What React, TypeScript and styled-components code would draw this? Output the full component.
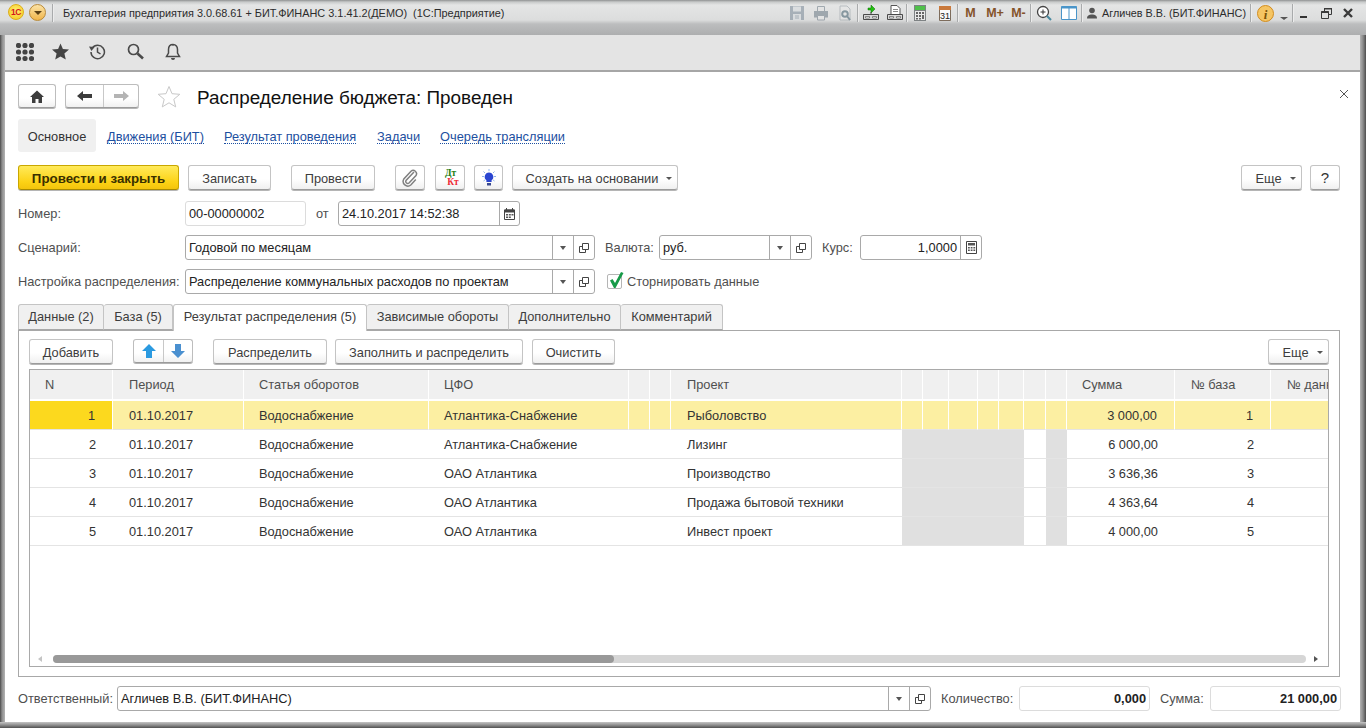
import React from "react";
import styled, { createGlobalStyle } from "styled-components";

const Global = createGlobalStyle`
  html, body { margin: 0; padding: 0; overflow: hidden; background: #6a6a6a; }
  * { box-sizing: border-box; }
  body { font-family: "Liberation Sans", Arial, sans-serif; font-size: 12.8px; color: #333; }
`;

const Frame = styled.div`
  width: 1366px; height: 728px; display: flex; flex-direction: column; overflow: hidden;
  background: linear-gradient(90deg, #4a4a4a 0, #8c8c8c 2px, #b4b4b4 5px, #b4b4b4 1360px, #8a8a8a 1363px, #4e4e4e 1366px);
`;
const TitleBar = styled.div`
  height: 35px; flex: none; display: flex; align-items: flex-start; padding: 4px 0 0 8px; position: relative;
  background: linear-gradient(180deg, #8f9192 0, #c8caca 2px, #e4e5e5 5px, #dcdddd 20px, #bcbdbe 24px, #adaeaf 35px);
`;
const Logo = styled.span`
  width: 16px; height: 16px; border-radius: 50%; flex: none; display: flex; align-items: center; justify-content: center;
  background: radial-gradient(circle at 50% 40%, #ffee70, #f5c71e); border: 1px solid #dcae18;
  color: #d3161b; font: bold 8.5px "Liberation Sans", sans-serif; letter-spacing: -0.5px;
`;
const MenuRound = styled.span`
  width: 17px; height: 17px; margin-left: 5px; border-radius: 50%; flex: none; display: flex; align-items: center; justify-content: center;
  background: linear-gradient(180deg, #fbe3a6, #f0b54a); border: 1px solid #b98a38;
  &::after { content: ""; border-left: 4px solid transparent; border-right: 4px solid transparent; border-top: 4px solid #5a4015; }
`;
const TitleSep = styled.i<{ $ml?: number }>`
  width: 1px; height: 18px; flex: none; background: #a9abac; box-shadow: 1px 0 #ececec; margin-left: ${p => p.$ml ?? 0}px;
`;
const AppName = styled.span`
  margin-left: 10px; font-size: 10.9px; line-height: 18px; color: #2c2c2c; white-space: pre;
`;
const TitleTools = styled.div`
  margin-left: auto; display: flex; align-items: center; height: 18px; padding-right: 7px;
`;
const ToolCell = styled.span<{ $w: number; $dim?: boolean }>`
  width: ${p => p.$w}px; height: 18px; flex: none; display: flex; align-items: center; justify-content: center;
  opacity: ${p => (p.$dim ? 0.5 : 1)};
`;
const MemText = styled.span`
  font: bold 12.5px "Liberation Sans", sans-serif; color: #84532a; white-space: nowrap;
`;
const UserName = styled.span`
  font-size: 10.8px; color: #2c2c2c; white-space: nowrap; width: 148px; margin-left: 1px;
`;

const TopBar = styled.div`
  height: 37px; flex: none; margin: 0 6px 0 5px; background: #e4e4e4; border-bottom: 2px solid #a6a6a6;
  display: flex; align-items: center; padding: 0 0 2px 11px;
`;
const TopIcon = styled.span<{ $w: number }>`
  width: ${p => p.$w}px; flex: none; display: flex; justify-content: flex-start; align-items: center;
`;

const Content = styled.div`
  flex: none; height: 650px; margin: 0 6px 0 5px; background: #fff; padding: 12px 20px 0 13px;
  display: flex; flex-direction: column;
`;
const BottomEdge = styled.div`
  height: 6px; flex: none; background: linear-gradient(180deg, #c4c4c4 0, #909090 3px, #505050 6px);
`;
const HeaderRow = styled.div`
  height: 24px; flex: none; display: flex; align-items: center;
`;
const NavGroup = styled.div<{ $ml?: number }>`
  display: flex; height: 24px; flex: none; margin-left: ${p => p.$ml ?? 0}px; border: 1px solid #bdbdbd; border-bottom-color: #9b9b9b; border-radius: 3px;
  background: linear-gradient(180deg, #fff 60%, #f1f1f1); box-shadow: 0 1px 0 #b5b5b5;
`;
const NavBtn = styled.span<{ $w: number; $sep?: boolean }>`
  width: ${p => p.$w}px; display: flex; align-items: center; justify-content: center; border-left: ${p => (p.$sep ? "1px solid #c8c8c8" : "none")};
`;
const StarWrap = styled.span`
  margin-left: 17px; width: 25px; height: 24px; flex: none; display: flex; align-items: center; justify-content: center;
`;
const Title = styled.h1`
  margin: 3px 0 0 16px; font-size: 18.9px; font-weight: 400; color: #111; white-space: nowrap; line-height: 24px;
`;
const CloseX = styled.span`
  margin-left: auto; margin-right: -10px; width: 12px; height: 12px; display: flex; margin-top: -4px;
`;
const LinksRow = styled.nav`
  height: 33px; flex: none; margin-top: 11px; display: flex; align-items: stretch;
`;
const CurrentLink = styled.span`
  width: 78px; background: #f0f0f0; border-radius: 3px; display: flex; align-items: center; justify-content: center; color: #333; padding-top: 1px;
`;
const Link = styled.a<{ $left: number }>`
  margin: 2px 0 0 ${p => p.$left}px; align-self: center; color: #1c4fa0; text-decoration: none; border-bottom: 1px dotted #1c4fa0; line-height: 13px; white-space: nowrap;
`;

const Bar = styled.div<{ $mt?: number }>`
  height: 26px; flex: none; display: flex; align-items: stretch; margin-top: ${p => p.$mt ?? 13}px;
`;
const Btn = styled.button<{ $w: number; $ml?: number; $push?: boolean }>`
  width: ${p => p.$w}px; margin-left: ${p => (p.$push ? "auto" : `${p.$ml ?? 0}px`)}; height: 25px; flex: none; padding: 1px 0 0;
  display: flex; align-items: center; justify-content: center; gap: 6px; font: 12.8px "Liberation Sans", sans-serif; color: #3d3d3d;
  border: 1px solid #c4c4c4; border-bottom-color: #9b9b9b; border-radius: 3px; background: linear-gradient(180deg, #fff 55%, #f0f0f0);
  box-shadow: 0 1px 0 #b5b5b5;
`;
const PrimaryBtn = styled(Btn)`
  font-size: 13.3px; font-weight: 700; color: #3a3000; border-color: #c9a700; border-bottom-color: #a88a00;
  background: linear-gradient(180deg, #ffea5a, #fcd215 70%, #f3c40c);
`;
const HelpBtn = styled(Btn)`
  font-size: 15px; color: #333; padding: 0;
`;
const DropBtn = styled(Btn)`
  gap: 8px; padding-left: 8px;
`;
const Caret = styled.i`
  width: 0; height: 0; border-left: 3px solid transparent; border-right: 3px solid transparent; border-top: 3px solid #555; margin-top: 1px;
`;
const DtKt = styled.span`
  display: flex; flex-direction: column; font: bold 9.5px/9px "Liberation Serif", serif; margin-left: 1px;
`;
const Dt = styled.b`color: #1e7d12;`;
const Kt = styled.b`color: #ee2a35; margin-left: 5px;`;

const FieldRow = styled.div<{ $mt?: number }>`
  height: 25px; flex: none; margin-top: ${p => p.$mt ?? 9}px; display: flex; align-items: center;
`;
const Label = styled.label<{ $w?: number; $ml?: number }>`
  color: #4f4f4f; white-space: nowrap; flex: none; ${p => (p.$w ? `width: ${p.$w}px;` : "")} margin-left: ${p => p.$ml ?? 0}px;
`;
const Field = styled.div<{ $w: number; $soft?: boolean; $ml?: number }>`
  width: ${p => p.$w}px; height: 25px; flex: none; display: flex; align-items: stretch; margin-left: ${p => p.$ml ?? 0}px;
  border: 1px solid ${p => (p.$soft ? "#dcdcdc" : "#a9a9a9")}; border-radius: 3px; background: #fff;
`;
const FieldText = styled.span<{ $right?: boolean; $bold?: boolean }>`
  flex: 1; min-width: 0; display: flex; align-items: center; padding: 0 3px; color: #222; white-space: nowrap;
  justify-content: ${p => (p.$right ? "flex-end" : "flex-start")}; font-weight: ${p => (p.$bold ? 700 : 400)};
`;
const FieldBtn = styled.span<{ $w?: number }>`
  width: ${p => p.$w ?? 21}px; flex: none; border-left: 1px solid #a9a9a9; display: flex; align-items: center; justify-content: center;
`;
const CheckBox = styled.span`
  width: 15px; height: 15px; margin-left: 12px; flex: none; border: 1px solid #b5b5b5; border-radius: 2px; position: relative;
`;
const CheckMark = styled.svg`
  position: absolute; left: 1px; top: -4px;
`;
const CheckLabel = styled.span`
  margin-left: 5px; color: #4f4f4f; white-space: nowrap;
`;

const Tabs = styled.div`
  height: 26px; flex: none; margin-top: 10px; display: flex; position: relative; z-index: 1;
`;
const Tab = styled.span<{ $w: number; $active?: boolean }>`
  width: ${p => p.$w}px; height: ${p => (p.$active ? 27 : 26)}px; flex: none; display: flex; align-items: center; justify-content: center; white-space: nowrap;
  padding-bottom: ${p => (p.$active ? 3 : 2)}px;
  color: #3d3d3d; background: ${p => (p.$active ? "#fff" : "#f0f0f0")}; border: 1px solid #c4c4c4; border-left-width: ${p => (p.$active ? 1 : 0)}px;
  border-bottom: ${p => (p.$active ? "none" : "1px solid #a8a8a8")}; border-radius: 3px 3px 0 0;
  &:first-child { border-left-width: 1px; }
`;
const Panel = styled.section`
  height: 347px; flex: none; border: 1px solid #a8a8a8; padding: 8px 10px 9px; display: flex; flex-direction: column;
`;
const Grid = styled.div`
  margin-top: 4px; flex: 1; min-height: 0; border: 1px solid #a9a9a9; display: flex; flex-direction: column; overflow: hidden;
`;
const Table = styled.div<{ $cols: string }>`
  flex: 1; display: grid; grid-template-columns: ${p => p.$cols}; grid-auto-rows: 29px; align-content: start; width: max-content;
  grid-template-rows: 31px;
`;
const Head = styled.div<{ $pad: number }>`
  background: #f0f0f0; border-right: 1px solid #fff; border-bottom: 2px solid #fff; color: #4f4f4f; display: flex; align-items: center; padding-left: ${p => p.$pad}px; white-space: nowrap;
`;
const Cell = styled.div<{ $right?: boolean; $sel?: boolean; $cur?: boolean; $grey?: boolean; $pad?: number }>`
  display: flex; align-items: center; white-space: nowrap; color: #333;
  padding: 0 ${p => (p.$right ? 17 : 0)}px 0 ${p => (p.$right ? 0 : p.$pad ?? 15)}px;
  justify-content: ${p => (p.$right ? "flex-end" : "flex-start")};
  background: ${p => (p.$cur ? "#fcd91e" : p.$sel ? "#fcefa2" : p.$grey ? "#e0e0e0" : "#fff")};
  border-right: ${p => (p.$sel || p.$cur ? "1px solid #fff" : "0")};
  border-bottom: 1px solid #e4e4e4;
`;
const ScrollRow = styled.div`
  height: 15px; flex: none; display: flex; align-items: center; padding: 0 10px 0 8px;
`;
const ArrowL = styled.i`
  width: 0; height: 0; border-top: 3px solid transparent; border-bottom: 3px solid transparent; border-right: 4px solid #c4c4c4;
`;
const ArrowR = styled.i`
  width: 0; height: 0; border-top: 3px solid transparent; border-bottom: 3px solid transparent; border-left: 4px solid #555; margin-left: 8px;
`;
const Track = styled.div`
  flex: 1; height: 8px; margin-left: 11px; border-radius: 4px; background: #d6d6d6; display: flex;
`;
const Thumb = styled.div`
  width: 561px; border-radius: 4px; background: #999;
`;
const Footer = styled.div`
  height: 25px; flex: none; margin-top: 9px; display: flex; align-items: center;
`;

const Tool = ({ children, w = 16, h = 16 }: { children: React.ReactNode; w?: number; h?: number }) => (
  <svg width={w} height={h} viewBox={`0 0 ${w} ${h}`}>{children}</svg>
);

const SaveIcon = () => <Tool><path d="M1 1h14v14H1z" fill="#6f8090" /><path d="M4 1.500h8v5H4z" fill="#d5dade" /><path d="M4 9h8v6H4z" fill="#d5dade" /><path d="M6 11h4M6 13h4" stroke="#6f8090" /></Tool>;
const PrintIcon = () => <Tool><path d="M4.500 1.500h7v5h-7z" fill="#e4e4e4" stroke="#5f6f7c" /><path d="M1 6h14v6.500H1z" fill="#5f6f7c" /><path d="M4.500 10.500h7v4.500h-7z" fill="#e8e8e8" stroke="#5f6f7c" /></Tool>;
const PreviewIcon = () => <Tool><path d="M3 1h7l3 3v11H3z" fill="#e8e8e8" stroke="#8e979e" /><circle cx="8" cy="9" r="2.800" fill="none" stroke="#2f5060" strokeWidth="2" /><path d="M10 11l3 4" stroke="#2f5060" strokeWidth="2" /></Tool>;
const LoadIcon = () => <Tool><path d="M5 3h3V0l4 4-4 4V5H5z" fill="#22c010" stroke="#0b6d02" strokeWidth=".5" /><path d="M.5 9.500h15v5H.5z" fill="#d8d8d8" stroke="#4a4a4a" /><path d="M2.500 11.500h4v1.500h-4zM9.500 11.500h4v1.500h-4z" fill="#fff" stroke="#4a4a4a" strokeWidth=".6" /><path d="M8 7v2.500" stroke="#4a4a4a" /></Tool>;
const FileIcon = () => <Tool><path d="M4 .5h6l3 3v6H4z" fill="#fff" stroke="#555" /><path d="M6 4.500h5M6 6.500h5" stroke="#888" /><path d="M.5 9.500h15v5H.5z" fill="#d8d8d8" stroke="#4a4a4a" /><path d="M2.500 11.500h4v1.500h-4zM9.500 11.500h4v1.500h-4z" fill="#fff" stroke="#4a4a4a" strokeWidth=".6" /></Tool>;
const CalcIcon = () => <Tool><path d="M2 0h12v16H2z" fill="#7e8284" /><path d="M3 1h10v4H3z" fill="#4fc04a" /><path d="M3 6h10v9H3z" fill="#e9e9e9" /><path d="M4 7h2v2H4zM7 7h2v2H7zM10 7h2v2h-2zM4 10h2v2H4zM7 10h2v2H7zM10 10h2v4h-2zM4 13h2v1.500H4zM7 13h2v1.500H7z" fill="#666" /></Tool>;
const CalendarIcon = () => <Tool><path d="M2.500 1.500h11v14h-11z" fill="#fafafa" stroke="#7d6c5c" /><path d="M2 1h12v4H2z" fill="#c9793c" /><text x="8" y="14" textAnchor="middle" fontSize="9" fontFamily="Liberation Sans" fill="#222">31</text></Tool>;
const ZoomIcon = () => <Tool><circle cx="7" cy="7" r="5.500" fill="#fff" stroke="#444" strokeWidth="1.300" /><path d="M7 4.500v5M4.500 7h5" stroke="#333" /><path d="M11 11l4 4" stroke="#4a8aa0" strokeWidth="2.200" /></Tool>;
const PanelsIcon = () => <Tool><path d="M.5 1.500h15v13H.5z" fill="#fff" stroke="#4a95c9" /><path d="M.5 1.500h15v2H.5z" fill="#4a95c9" /><path d="M8 2v12" stroke="#4a95c9" /></Tool>;
const PersonIcon = () => <Tool w={10} h={12}><circle cx="5" cy="3.500" r="2.800" fill="#555" /><path d="M0 11.500c0-3 2-4 5-4s5 1 5 4z" fill="#555" /></Tool>;
const InfoIcon = () => <Tool w={17} h={17}><circle cx="8.500" cy="8.500" r="8" fill="#f5c563" stroke="#d18c1f" /><text x="8.500" y="13.500" textAnchor="middle" fontSize="13" fontWeight="bold" fontStyle="italic" fontFamily="Liberation Serif" fill="#7a5205">i</text></Tool>;
const CaretDown = () => <Tool w={8} h={16}><path d="M0 12h8L4 15z" fill="#555" /></Tool>;
const MinIcon = () => <Tool w={10} h={16}><path d="M1 11h7v2H1z" fill="#333" /></Tool>;
const RestoreIcon = () => <Tool w={13} h={13}><path d="M4.500 1.500h7v6H9M4.500 1.500V4" fill="none" stroke="#3a3a3a" /><path d="M1.500 4.500h7v7h-7z" fill="none" stroke="#3a3a3a" /><path d="M4 1h8v1.500H4zM1 4.500h8V6H1z" fill="#3a3a3a" /></Tool>;
const XIcon = () => <Tool w={12} h={12}><path d="M2 2l8 8M10 2l-8 8" stroke="#3a3a3a" strokeWidth="2.400" /></Tool>;

const GridDots = () => (
  <Tool w={18} h={18}>
    {[2.5, 9, 15.5].flatMap(y => [2.5, 9, 15.5].map(x => <circle key={`${x}${y}`} cx={x} cy={y} r="2.600" fill="#444" />))}
  </Tool>
);
const StarFill = () => <Tool w={17} h={17}><path d="M8.500 .5l2.400 5.600 6.100.5-4.600 4 1.400 6-5.300-3.200L3.200 16.600l1.400-6L0 6.600l6.100-.5z" fill="#444" /></Tool>;
const HistoryIcon = () => <Tool w={17} h={17}><path d="M3.200 5.200A6.700 6.700 0 1 1 2 9" fill="none" stroke="#4a4a4a" strokeWidth="1.500" /><path d="M0 3.500l5.500.5-3 4z" fill="#4a4a4a" /><path d="M8.500 4.500V9l3 2" fill="none" stroke="#4a4a4a" strokeWidth="1.500" /></Tool>;
const SearchIcon = () => <Tool w={17} h={17}><circle cx="6.500" cy="6.500" r="5" fill="none" stroke="#4a4a4a" strokeWidth="1.700" /><path d="M10.500 10.500L16 15.500" stroke="#4a4a4a" strokeWidth="2.600" /></Tool>;
const BellIcon = () => <Tool w={16} h={18}><path d="M8 1.500c-3 0-4.500 2.400-4.500 5v3.500L1.500 13.500h13L12.500 10V6.500c0-2.600-1.500-5-4.500-5z" fill="none" stroke="#4a4a4a" strokeWidth="1.500" /><path d="M6 15a2 2 0 0 0 4 0z" fill="#4a4a4a" /><path d="M7 1h2v1.500H7z" fill="#4a4a4a" /></Tool>;

const HomeIcon = () => <Tool w={14} h={13}><path d="M7 .5L14 7h-2v6H8.500V9h-3v4H2V7H0z" fill="#3c3c3c" /></Tool>;
const ArrowLeft = ({ c }: { c: string }) => <Tool w={15} h={12}><path d="M0 6l6-5v3h9v4H6v3z" fill={c} /></Tool>;
const ArrowRight = ({ c }: { c: string }) => <Tool w={15} h={12}><path d="M15 6L9 1v3H0v4h9v3z" fill={c} /></Tool>;
const StarOutline = () => <Tool w={24} h={23}><path d="M12 1.500l3 7.200 7.800.6-6 5 1.900 7.600L12 17.800l-6.700 4.100 1.900-7.600-6-5L9 8.700z" fill="#fff" stroke="#c8c8c8" /></Tool>;
const CloseThin = () => <Tool w={12} h={12}><path d="M2 2l8 8M10 2l-8 8" stroke="#555" strokeWidth="1" /></Tool>;

const ClipIcon = () => <Tool w={18} h={18}><path d="M13 3L5 11.500a2 2 0 0 0 3 2.500l7-7.500a3.300 3.300 0 0 0-5-4.200L2.800 10a4.700 4.700 0 0 0 7 6l5-5.500" fill="none" stroke="#808080" strokeWidth="1.500" /></Tool>;
const BulbIcon = () => (
  <Tool w={18} h={18}>
    <path d="M9 3.500a4.300 4.300 0 0 0-2.600 7.700V13h5.200v-1.800A4.300 4.300 0 0 0 9 3.500z" fill="#2a45d0" />
    <path d="M7 14h4v2.500H7z" fill="#3a4a90" />
    <path d="M9 0v2.200M2 7.500h2.200M13.800 7.500H16M3.500 2.500L5 4M14.500 2.500L13 4M3.500 12l1.400-1M14.500 12l-1.400-1" stroke="#8fb4ea" />
  </Tool>
);
const DropTri = () => <Tool w={6} h={4}><path d="M0 0h6L3 4z" fill="#555" /></Tool>;
const OpenIcon = () => <Tool w={12} h={12}><path d="M4.500 1.500h6v6h-6z" fill="none" stroke="#444" /><path d="M4.500 4.500h-3v6h6v-3" fill="none" stroke="#444" /></Tool>;
const DateIcon = () => <Tool w={11} h={12}><path d="M.5 2h10v9.500H.5z" fill="#fff" stroke="#444" /><path d="M.5 1.500h10v3H.5z" fill="#444" /><path d="M2.500 0v2M8.500 0v2" stroke="#444" /><path d="M2 6h2v1.500H2zM4.800 6h2v1.500h-2zM7.500 6h2v1.500h-2zM2 8.500h2V10H2zM4.800 8.500h2V10h-2z" fill="#555" /></Tool>;
const CalcSmall = () => <Tool w={11} h={13}><path d="M.5.500h10v12H.5z" fill="#fff" stroke="#444" /><path d="M2 2h7v2.500H2z" fill="#555" /><path d="M2 6h1.800v1.500H2zM4.700 6h1.800v1.500H4.700zM7.400 6h1.800v1.500H7.400zM2 8.500h1.800V10H2zM4.700 8.500h1.800V10H4.700zM7.400 8.500h1.800V10H7.400z" fill="#555" /></Tool>;
const ArrowUp = () => <Tool w={14} h={14}><path d="M7 0l7 7H10v7H4V7H0z" fill="#2b9ae0" /></Tool>;
const ArrowDown = () => <Tool w={14} h={14}><path d="M7 14l7-7H10V0H4v7H0z" fill="#4a90d0" /></Tool>;

const COLS = [83, 131, 185, 200, 21, 21, 231, 21, 26, 29, 21, 25, 22, 21, 108, 96, 129].map(n => `${n}px`).join(" ");
const HEADS = ["N", "Период", "Статья оборотов", "ЦФО", "", "", "Проект", "", "", "", "", "", "", "", "Сумма", "№ база", "№ данные"];
const ROWS = [
  ["1", "01.10.2017", "Водоснабжение", "Атлантика-Снабжение", "Рыболовство", "3 000,00", "1"],
  ["2", "01.10.2017", "Водоснабжение", "Атлантика-Снабжение", "Лизинг", "6 000,00", "2"],
  ["3", "01.10.2017", "Водоснабжение", "ОАО Атлантика", "Производство", "3 636,36", "3"],
  ["4", "01.10.2017", "Водоснабжение", "ОАО Атлантика", "Продажа бытовой техники", "4 363,64", "4"],
  ["5", "01.10.2017", "Водоснабжение", "ОАО Атлантика", "Инвест проект", "4 000,00", "5"],
];
const PAD16 = [1, 6, 15, 16];

const DataRow = ({ r, sel }: { r: string[]; sel: boolean }) => {
  const isGrey = (i: number) => !sel && ((i >= 7 && i <= 11) || i === 13);
  const map: Record<number, string> = { 1: r[1], 2: r[2], 3: r[3], 6: r[4] };
  return (
    <>
      <Cell $right $cur={sel}>{r[0]}</Cell>
      {[1, 2, 3, 4, 5, 6, 7, 8, 9, 10, 11, 12, 13].map(i => (
        <Cell key={i} $sel={sel} $grey={isGrey(i)} $pad={PAD16.includes(i) ? 16 : 15}>{map[i] ?? ""}</Cell>
      ))}
      <Cell $right $sel={sel}>{r[5]}</Cell>
      <Cell $right $sel={sel}>{r[6]}</Cell>
      <Cell $sel={sel} />
    </>
  );
};

export default function App() {
  return (
    <Frame>
      <Global />
      <TitleBar>
        <Logo>1С</Logo>
        <MenuRound />
        <TitleSep $ml={6} />
        <AppName>Бухгалтерия предприятия 3.0.68.61 + БИТ.ФИНАНС 3.1.41.2(ДЕМО)  (1С:Предприятие)</AppName>
        <TitleTools>
          <ToolCell $w={24} $dim><SaveIcon /></ToolCell>
          <ToolCell $w={24} $dim><PrintIcon /></ToolCell>
          <ToolCell $w={24} $dim><PreviewIcon /></ToolCell>
          <TitleSep />
          <ToolCell $w={25}><LoadIcon /></ToolCell>
          <ToolCell $w={23}><FileIcon /></ToolCell>
          <TitleSep />
          <ToolCell $w={25}><CalcIcon /></ToolCell>
          <ToolCell $w={25}><CalendarIcon /></ToolCell>
          <TitleSep />
          <ToolCell $w={25}><MemText>М</MemText></ToolCell>
          <ToolCell $w={24}><MemText>М+</MemText></ToolCell>
          <ToolCell $w={23}><MemText>М-</MemText></ToolCell>
          <TitleSep />
          <ToolCell $w={26}><ZoomIcon /></ToolCell>
          <ToolCell $w={24}><PanelsIcon /></ToolCell>
          <TitleSep />
          <ToolCell $w={19}><PersonIcon /></ToolCell>
          <UserName>Агличев В.В. (БИТ.ФИНАНС)</UserName>
          <TitleSep />
          <ToolCell $w={28}><InfoIcon /></ToolCell>
          <ToolCell $w={10}><CaretDown /></ToolCell>
          <TitleSep $ml={3} />
          <ToolCell $w={22}><MinIcon /></ToolCell>
          <ToolCell $w={22}><RestoreIcon /></ToolCell>
          <ToolCell $w={22}><XIcon /></ToolCell>
        </TitleTools>
      </TitleBar>

      <TopBar>
        <TopIcon $w={36}><GridDots /></TopIcon>
        <TopIcon $w={37}><StarFill /></TopIcon>
        <TopIcon $w={38}><HistoryIcon /></TopIcon>
        <TopIcon $w={38}><SearchIcon /></TopIcon>
        <TopIcon $w={20}><BellIcon /></TopIcon>
      </TopBar>

      <Content>
        <HeaderRow>
          <NavGroup><NavBtn $w={36}><HomeIcon /></NavBtn></NavGroup>
          <NavGroup $ml={9}>
            <NavBtn $w={37}><ArrowLeft c="#3c3c3c" /></NavBtn>
            <NavBtn $w={35} $sep><ArrowRight c="#b4b4b4" /></NavBtn>
          </NavGroup>
          <StarWrap><StarOutline /></StarWrap>
          <Title>Распределение бюджета: Проведен</Title>
          <CloseX><CloseThin /></CloseX>
        </HeaderRow>

        <LinksRow>
          <CurrentLink>Основное</CurrentLink>
          <Link $left={11}>Движения (БИТ)</Link>
          <Link $left={20}>Результат проведения</Link>
          <Link $left={21}>Задачи</Link>
          <Link $left={20}>Очередь трансляции</Link>
        </LinksRow>

        <Bar>
          <PrimaryBtn $w={161}>Провести и закрыть</PrimaryBtn>
          <Btn $w={83} $ml={9}>Записать</Btn>
          <Btn $w={84} $ml={20}>Провести</Btn>
          <Btn $w={30} $ml={20}><ClipIcon /></Btn>
          <Btn $w={30} $ml={10}><DtKt><Dt>Дт</Dt><Kt>Кт</Kt></DtKt></Btn>
          <Btn $w={29} $ml={9}><BulbIcon /></Btn>
          <DropBtn $w={166} $ml={9}>Создать на основании <Caret /></DropBtn>
          <DropBtn $w={61} $push>Еще <Caret /></DropBtn>
          <HelpBtn $w={30} $ml={8}>?</HelpBtn>
        </Bar>

        <FieldRow $mt={10}>
          <Label $w={167}>Номер:</Label>
          <Field $w={121} $soft><FieldText>00-00000002</FieldText></Field>
          <Label $ml={10} $w={22}>от</Label>
          <Field $w={182}>
            <FieldText>24.10.2017 14:52:38</FieldText>
            <FieldBtn $w={20}><DateIcon /></FieldBtn>
          </Field>
        </FieldRow>
        <FieldRow>
          <Label $w={167}>Сценарий:</Label>
          <Field $w={410}>
            <FieldText>Годовой по месяцам</FieldText>
            <FieldBtn><DropTri /></FieldBtn>
            <FieldBtn><OpenIcon /></FieldBtn>
          </Field>
          <Label $ml={10} $w={54}>Валюта:</Label>
          <Field $w={153}>
            <FieldText>руб.</FieldText>
            <FieldBtn><DropTri /></FieldBtn>
            <FieldBtn><OpenIcon /></FieldBtn>
          </Field>
          <Label $ml={10} $w={38}>Курс:</Label>
          <Field $w={122}>
            <FieldText $right>1,0000</FieldText>
            <FieldBtn><CalcSmall /></FieldBtn>
          </Field>
        </FieldRow>
        <FieldRow>
          <Label $w={167}>Настройка распределения:</Label>
          <Field $w={410}>
            <FieldText>Распределение коммунальных расходов по проектам</FieldText>
            <FieldBtn><DropTri /></FieldBtn>
            <FieldBtn><OpenIcon /></FieldBtn>
          </Field>
          <CheckBox>
            <CheckMark width="15" height="18" viewBox="0 0 15 18">
              <path d="M1 9.500l2.500-1.500 2.500 4L12 1l2.500 1L6.500 17h-1.500z" fill="#169a48" />
            </CheckMark>
          </CheckBox>
          <CheckLabel>Сторнировать данные</CheckLabel>
        </FieldRow>

        <Tabs>
          <Tab $w={86}>Данные (2)</Tab>
          <Tab $w={69}>База (5)</Tab>
          <Tab $w={194} $active>Результат распределения (5)</Tab>
          <Tab $w={142}>Зависимые обороты</Tab>
          <Tab $w={112}>Дополнительно</Tab>
          <Tab $w={102}>Комментарий</Tab>
        </Tabs>
        <Panel>
          <Bar $mt={0}>
            <Btn $w={84}>Добавить</Btn>
            <NavGroup $ml={20}>
              <NavBtn $w={29}><ArrowUp /></NavBtn>
              <NavBtn $w={29} $sep><ArrowDown /></NavBtn>
            </NavGroup>
            <Btn $w={114} $ml={20}>Распределить</Btn>
            <Btn $w={188} $ml={8}>Заполнить и распределить</Btn>
            <Btn $w={83} $ml={9}>Очистить</Btn>
            <DropBtn $w={61} $push>Еще <Caret /></DropBtn>
          </Bar>
          <Grid>
            <Table $cols={COLS}>
              {HEADS.map((h, i) => <Head key={i} $pad={PAD16.includes(i) ? 16 : 15}>{h}</Head>)}
              {ROWS.map((r, i) => <DataRow key={r[0]} r={r} sel={i === 0} />)}
            </Table>
            <ScrollRow>
              <ArrowL />
              <Track><Thumb /></Track>
              <ArrowR />
            </ScrollRow>
          </Grid>
        </Panel>

        <Footer>
          <Label $w={99}>Ответственный:</Label>
          <Field $w={814}>
            <FieldText>Агличев В.В. (БИТ.ФИНАНС)</FieldText>
            <FieldBtn><DropTri /></FieldBtn>
            <FieldBtn><OpenIcon /></FieldBtn>
          </Field>
          <Label $ml={10} $w={78}>Количество:</Label>
          <Field $w={131} $soft><FieldText $right $bold>0,000</FieldText></Field>
          <Label $ml={10} $w={50}>Сумма:</Label>
          <Field $w={131} $soft><FieldText $right $bold>21 000,00</FieldText></Field>
        </Footer>
      </Content>
      <BottomEdge />
    </Frame>
  );
}
